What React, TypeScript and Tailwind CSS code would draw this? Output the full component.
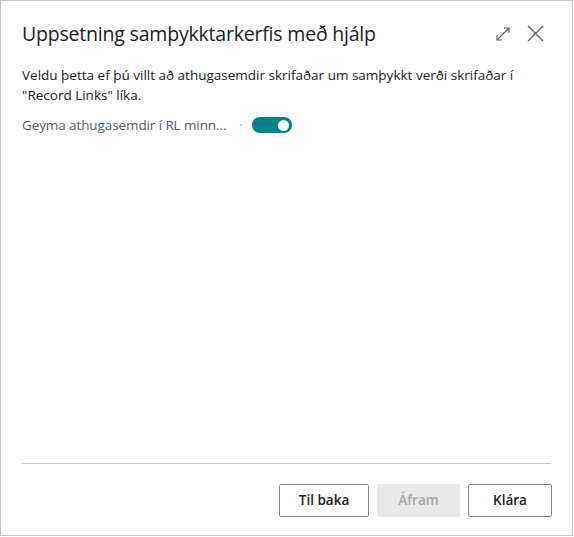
import React from "react";

export default function App() {
  return (
    <div className="w-[574px] h-[537px] bg-white" style={{ fontFamily: '"Open Sans", "Noto Sans", sans-serif' }}>
      <div className="w-[573px] h-[536px] border border-[#c8c8c8] flex flex-col bg-white">
        <div className="flex items-start justify-between pl-[21px] pr-[28px] pt-[19px]">
          <h1 className="text-[19.5px] leading-[28px] text-[#212121] tracking-[-0.2px]">Uppsetning samþykktarkerfis með hjálp</h1>
          <div className="flex items-center gap-[16px] pt-[5px]">
            <svg width="16" height="16" viewBox="0 0 16 16" fill="none" stroke="#605e5c" strokeWidth="1.1">
              <path d="M2 14 L14 2" />
              <path d="M9 2 H14 V7" />
              <path d="M2 9 V14 H7" />
            </svg>
            <svg width="17" height="17" viewBox="0 0 17 17" fill="none" stroke="#605e5c" strokeWidth="1.3">
              <path d="M1 1 L16 16 M16 1 L1 16" />
            </svg>
          </div>
        </div>
        <p className="pl-[21px] mt-[17px] text-[13.5px] leading-[20px] text-[#212121]">
          Veldu þetta ef þú villt að athugasemdir skrifaðar um samþykkt verði skrifaðar í
          <br />
          "Record Links" líka.
        </p>
        <div className="flex items-center pl-[21px] mt-[10px]">
          <span className="w-[206px] whitespace-nowrap text-[13.5px] leading-[20px] text-[#505c6d] tracking-[-0.1px]">Geyma athugasemdir í RL minn...</span>
          <span className="ml-[12px] w-[2px] h-[2px] bg-[#c8c8c8]" />
          <div className="ml-[10px] w-[40px] h-[16px] rounded-full bg-[#00838a] flex items-center justify-end pr-[3px]">
            <div className="w-[11px] h-[11px] rounded-full bg-white" />
          </div>
        </div>
        <div className="flex-1" />
        <div className="mx-[21px] border-t border-[#c8c8c8]" />
        <div className="flex justify-end gap-[8px] pr-[20px] pt-[20px] pb-[18px]">
          <button className="w-[90px] h-[33px] border border-[#8a8886] rounded-[2px] text-[13.5px] font-semibold text-[#212121] bg-white">Til baka</button>
          <button className="w-[83px] h-[33px] rounded-[2px] text-[13.5px] font-semibold text-[#a6a6a6] bg-[#e9e9e9]">Áfram</button>
          <button className="w-[84px] h-[33px] border border-[#8a8886] rounded-[2px] text-[13.5px] font-semibold text-[#212121] bg-white">Klára</button>
        </div>
      </div>
    </div>
  );
}
